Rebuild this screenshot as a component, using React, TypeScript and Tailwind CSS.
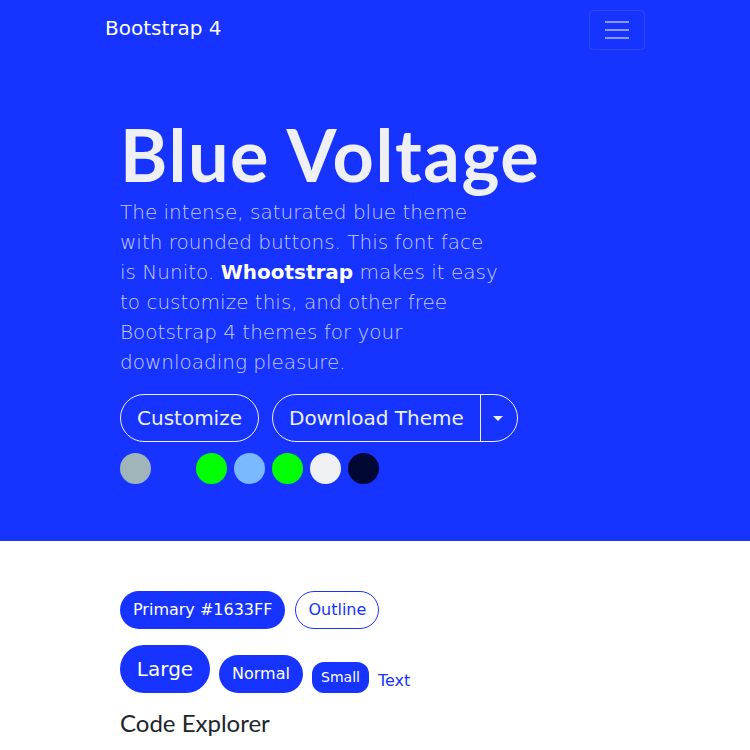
import React from 'react';

const swatches = ['#a0b5b9', '#1633ff', '#00ff00', '#7ab8ff', '#00ff00', '#eff0f3', '#000833'];

const sans = 'font-["DejaVu_Sans",sans-serif]';
const round = 'font-["Lato","Noto_Sans",sans-serif]';

export default function App() {
  return (
    <div className={`min-h-[750px] bg-white ${sans}`}>
      <section className="bg-[#1633ff] text-white">
        <nav className="mx-auto flex h-[59px] w-[540px] items-center justify-between">
          <span className="pb-[4px] text-[20px] leading-none">Bootstrap 4</span>
          <button className="flex h-[40px] w-[56px] flex-col items-center justify-center gap-[6px] rounded-[4px] border border-white/10">
            <span className="block h-[2px] w-[24px] bg-white/50" />
            <span className="block h-[2px] w-[24px] bg-white/50" />
            <span className="block h-[2px] w-[24px] bg-white/50" />
          </button>
        </nav>
        <div className="mx-auto w-[540px] px-[15px] pb-[57px] pt-[52px]">
          <h1 className={`${round} text-[72px] font-bold leading-[1.2] tracking-[1.6px] text-[#eff0f3]`}>
            Blue Voltage
          </h1>
          <p className="w-[381px] text-[20px] font-light leading-[30px] text-[#c6ccff]">
            The intense, saturated blue theme with rounded buttons. This font face is Nunito.{' '}
            <strong className="font-bold text-white">Whootstrap</strong> makes it easy to customize this, and
            other free Bootstrap 4 themes for your downloading pleasure.
          </p>
          <div className="mt-[17px] flex gap-[13px]">
            <button className="h-[48px] rounded-full border border-[#eff0f3] px-[16px] text-[20px] text-[#eff0f3]">
              Customize
            </button>
            <div className="flex h-[48px] rounded-full border border-[#eff0f3] text-[#eff0f3]">
              <button className="pl-[16px] pr-[16px] text-[20px]">Download Theme</button>
              <button className="flex w-[37px] items-center justify-center border-l border-[#eff0f3] pr-[2px]">
                <span className="block h-0 w-0 border-x-[5px] border-t-[5px] border-x-transparent border-t-[#eff0f3]" />
              </button>
            </div>
          </div>
          <div className="mt-[11px] flex gap-[7px]">
            {swatches.map((c, i) => (
              <span key={i} className="block h-[31px] w-[31px] rounded-full" style={{ backgroundColor: c }} />
            ))}
          </div>
        </div>
      </section>
      <section className="mx-auto w-[540px] px-[15px] pt-[50px]">
        <div className="flex gap-[10px]">
          <button className="h-[38px] rounded-full bg-[#1633ff] px-[13px] text-[16px] text-white">Primary #1633FF</button>
          <button className="h-[38px] rounded-full border border-[#1633ff] px-[12px] text-[16px] text-[#1633ff]">
            Outline
          </button>
        </div>
        <div className="mt-[16px] flex items-end gap-[9px]">
          <button className="h-[48px] w-[90px] rounded-full bg-[#1633ff] text-[20px] text-white">Large</button>
          <button className="h-[38px] w-[84px] rounded-full bg-[#1633ff] text-[16px] text-white">Normal</button>
          <button className="h-[31px] w-[57px] rounded-[12px] bg-[#1633ff] text-[14px] text-white">Small</button>
          <a className="text-[16px] text-[#1633ff]">Text</a>
        </div>
        <h2 className={`${round} mt-[12px] text-[24px] text-[#212529]`}>Code Explorer</h2>
      </section>
    </div>
  );
}
